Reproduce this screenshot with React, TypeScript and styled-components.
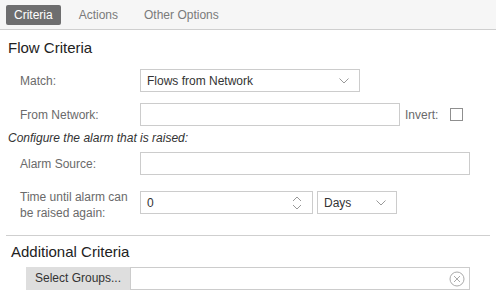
import React from "react";
import styled, { createGlobalStyle } from "styled-components";

const GlobalStyle = createGlobalStyle`
  body {
    margin: 0;
    background: #fff;
    font-family: "Liberation Sans", Arial, sans-serif;
    font-size: 12px;
  }
`;

const TabBar = styled.div`
  height: 29px;
  display: flex;
  align-items: center;
  gap: 10px;
  padding-left: 6px;
  background: #f6f6f6;
  border-bottom: 1px solid #cfcfcf;
`;

const Tab = styled.div<{ $active?: boolean }>`
  height: 20px;
  line-height: 20px;
  padding: 0 8px;
  margin-top: 1px;
  border-radius: 2px;
  font-size: 12px;
  color: ${(p) => (p.$active ? "#fff" : "#7a7a7a")};
  background: ${(p) => (p.$active ? "#6e6e6f" : "transparent")};
`;

const Section = styled.div<{ $top: number }>`
  padding: ${(p) => p.$top}px 8px 0 8px;
`;

const Title = styled.div<{ $indent?: number }>`
  font-size: 15px;
  line-height: 18px;
  color: #222;
  padding-left: ${(p) => p.$indent || 0}px;
`;

const Row = styled.div<{ $top: number; $align?: string }>`
  display: flex;
  align-items: ${(p) => p.$align || "center"};
  margin-top: ${(p) => p.$top}px;
  padding-left: 12px;
`;

const Label = styled.div`
  width: 120px;
  flex: none;
  color: #6a6a6a;
  font-size: 12px;
  line-height: 16px;
`;

const Controls = styled.div`
  display: flex;
  gap: 4px;
  margin-top: 2px;
`;

const Box = styled.div<{ $w: number }>`
  position: relative;
  box-sizing: border-box;
  width: ${(p) => p.$w}px;
  height: 23px;
  border: 1px solid #cccccc;
  background: #fff;
  display: flex;
  align-items: center;
  padding-left: 6px;
  color: #333;
  font-size: 12px;
`;

const Chevron = styled.svg`
  position: absolute;
  right: 10px;
  top: 8px;
`;

const Spinner = styled.svg`
  position: absolute;
  right: 10px;
  top: 3px;
`;

const ClearIcon = styled.svg`
  position: absolute;
  right: 4px;
  top: 3px;
`;

const InlineLabel = styled.span`
  margin-left: 5px;
  color: #6a6a6a;
`;

const Checkbox = styled.div`
  width: 13px;
  height: 13px;
  box-sizing: border-box;
  border: 1px solid #8f8f8f;
  margin-left: 12px;
`;

const Note = styled.div`
  margin-top: 4px;
  font-style: italic;
  color: #333;
  line-height: 16px;
`;

const Divider = styled.hr`
  margin: 14px 6px 0 6px;
  border: 0;
  border-top: 1px solid #cfcfcf;
`;

const GroupRow = styled.div`
  display: flex;
  margin-top: 6px;
  padding-left: 18px;
`;

const GroupButton = styled.div`
  width: 104px;
  height: 23px;
  line-height: 23px;
  text-align: center;
  background: #dedede;
  color: #333;
  font-size: 12px;
`;

const ChevronDown = () => (
  <Chevron width="10" height="6" viewBox="0 0 10 6">
    <path d="M0.5 0.5 L5 5 L9.5 0.5" fill="none" stroke="#999" strokeWidth="1" />
  </Chevron>
);

export default function App() {
  return (
    <>
      <GlobalStyle />
      <TabBar>
        <Tab $active>Criteria</Tab>
        <Tab>Actions</Tab>
        <Tab>Other Options</Tab>
      </TabBar>
      <Section $top={9}>
        <Title>Flow Criteria</Title>
        <Row $top={12}>
          <Label>Match:</Label>
          <Box $w={220}>
            Flows from Network
            <ChevronDown />
          </Box>
        </Row>
        <Row $top={11}>
          <Label>From Network:</Label>
          <Box $w={260} />
          <InlineLabel>Invert:</InlineLabel>
          <Checkbox />
        </Row>
        <Note>Configure the alarm that is raised:</Note>
        <Row $top={6}>
          <Label>Alarm Source:</Label>
          <Box $w={330} />
        </Row>
        <Row $top={14} $align="flex-start">
          <Label>
            Time until alarm can
            <br />
            be raised again:
          </Label>
          <Controls>
            <Box $w={173}>
              0
              <Spinner width="10" height="16" viewBox="0 0 10 16">
                <path d="M1 6 L5 2 L9 6" fill="none" stroke="#999" strokeWidth="1" />
                <path d="M1 10 L5 14 L9 10" fill="none" stroke="#999" strokeWidth="1" />
              </Spinner>
            </Box>
            <Box $w={80}>
              Days
              <ChevronDown />
            </Box>
          </Controls>
        </Row>
      </Section>
      <Divider />
      <Section $top={7}>
        <Title $indent={3}>Additional Criteria</Title>
        <GroupRow>
          <GroupButton>Select Groups...</GroupButton>
          <Box $w={340}>
            <ClearIcon width="16" height="16" viewBox="0 0 16 16">
              <circle cx="8" cy="8" r="7" fill="none" stroke="#aaa" strokeWidth="1" />
              <path d="M5 5 L11 11 M11 5 L5 11" stroke="#aaa" strokeWidth="1" />
            </ClearIcon>
          </Box>
        </GroupRow>
      </Section>
    </>
  );
}
